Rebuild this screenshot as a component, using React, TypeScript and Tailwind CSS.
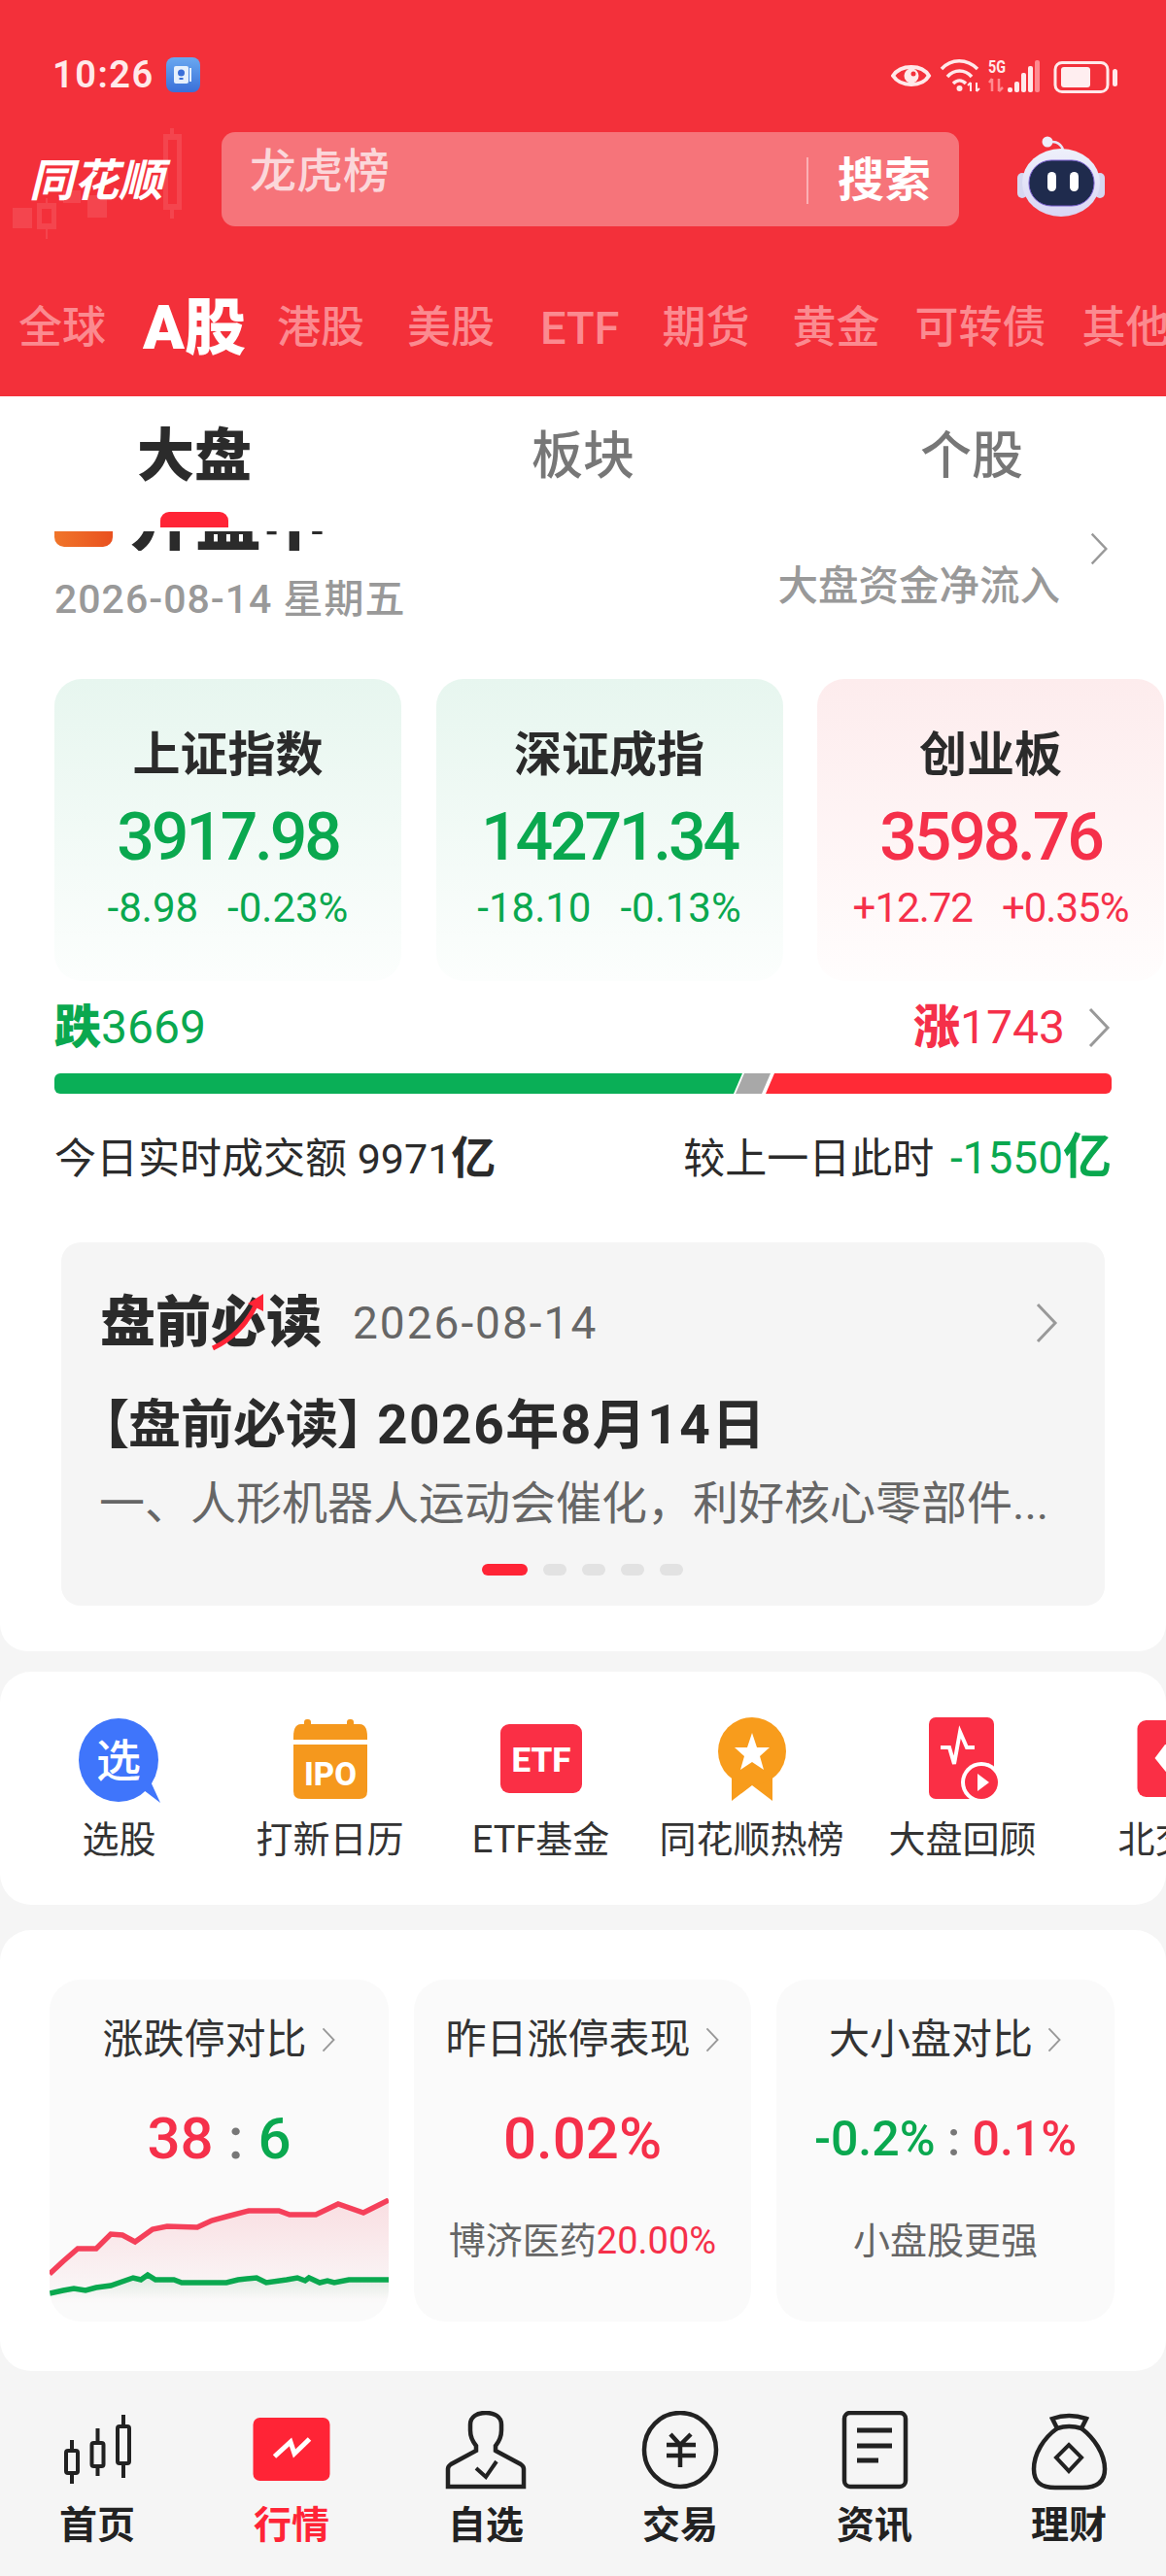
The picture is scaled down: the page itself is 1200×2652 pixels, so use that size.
const Chevron = ({ className = "w-[26px] h-[42px]" }: { className?: string }) => (
  <svg viewBox="0 0 26 42" className={className} fill="none" stroke="#999999" strokeWidth="3">
    <path d="M4 2 L22 21 L4 40" />
  </svg>
);

const marketTabs = [
  { label: "全球", cls: "text-[45px] font-medium text-[#fb8a90]" },
  { label: "A股", cls: "ml-[-6px] mr-[-12px] text-[63px] font-black text-white" },
  { label: "港股", cls: "text-[45px] font-medium text-[#fb8a90]" },
  { label: "美股", cls: "mr-[3px] text-[45px] font-medium text-[#fb8a90]" },
  { label: "ETF", cls: "text-[47px] font-medium text-[#fb8a90]" },
  { label: "期货", cls: "text-[45px] font-medium text-[#fb8a90]" },
  { label: "黄金", cls: "mr-[-8px] text-[45px] font-medium text-[#fb8a90]" },
  { label: "可转债", cls: "mr-[-7px] text-[45px] font-medium text-[#fb8a90]" },
  { label: "其他", cls: "text-[45px] font-medium text-[#fb8a90]" },
];
const RED = "text-[#f5304a]";
const GREEN = "text-[#0aa84f]";

function StatusIcons() {
  return (
    <svg viewBox="0 0 233 40" className="w-[233px] h-[40px]" fill="none">
      {/* eye */}
      <path d="M2 21 C10 9 32 9 39 21 C32 33 10 33 2 21 Z" stroke="#ffe9ea" strokeWidth="4" />
      <circle cx="21" cy="21" r="7.5" fill="#ffe9ea" />
      <circle cx="23" cy="19" r="2.5" fill="#f3303a" />
      {/* wifi */}
      <path d="M52 14 C62 3 78 3 89 14" stroke="#ffe9ea" strokeWidth="3.5" />
      <path d="M58 22 C65 14 76 14 83 22" stroke="#ffe9ea" strokeWidth="3.5" />
      <path d="M64 29 C68 25 73 25 77 29" stroke="#ffe9ea" strokeWidth="3.5" />
      <circle cx="70.5" cy="34" r="3" fill="#ffe9ea" />
      <path d="M82 28 V37 M88 28 V37 M79 31 L82 28 M88 37 L91 34" stroke="#ffe9ea" strokeWidth="2" />
      {/* signal */}
      <text x="100" y="18" fill="#ffe9ea" fontSize="19" fontWeight="700" fontFamily="Roboto" textLength="18" lengthAdjust="spacingAndGlyphs">5G</text>
      <path d="M104 24 V37 M111 24 V37 M101 28 L104 24 M111 37 L115 33" stroke="#ff8a90" strokeWidth="2.5" />
      <rect x="120" y="33" width="5" height="5" rx="2" fill="#ffe9ea" />
      <rect x="127" y="27" width="5" height="11" rx="2" fill="#ffe9ea" />
      <rect x="134" y="18" width="5" height="20" rx="2" fill="#ffe9ea" />
      <rect x="141" y="11" width="5" height="27" rx="2" fill="#ffe9ea" />
      <rect x="148" y="5" width="5" height="33" rx="2" fill="#ff8a90" />
      {/* battery */}
      <rect x="169" y="7.5" width="54" height="30" rx="7" stroke="#ffe9ea" strokeWidth="3" />
      <rect x="175" y="12" width="30" height="21" rx="3" fill="#ffeef0" />
      <rect x="228" y="14" width="5" height="18" rx="2.5" fill="#ffe9ea" />
    </svg>
  );
}

function Robot() {
  return (
    <svg viewBox="0 0 92 90" className="w-[92px] h-[90px]" fill="none">
      <defs>
        <linearGradient id="robotHead" x1="0" y1="0" x2="0" y2="1">
          <stop offset="0" stopColor="#eef0fb" />
          <stop offset="1" stopColor="#d9d6f4" />
        </linearGradient>
      </defs>
      <path d="M32 10 C37 6 45 8 48 16" stroke="#e8e6f7" strokeWidth="2.5" />
      <circle cx="32" cy="8" r="5.5" fill="#eeeefa" />
      <rect x="1" y="40" width="10" height="26" rx="5" fill="#d6d7f0" />
      <rect x="81" y="40" width="10" height="26" rx="5" fill="#d6d7f0" />
      <ellipse cx="46" cy="50" rx="40" ry="35" fill="url(#robotHead)" />
      <rect x="13" y="27" width="67" height="47" rx="23" fill="#1f2b4d" stroke="#7a5fd0" strokeWidth="1" />
      <rect x="32" y="39" width="9" height="20" rx="4.5" fill="#ffffff" />
      <rect x="55" y="39" width="9" height="20" rx="4.5" fill="#ffffff" />
    </svg>
  );
}

function Header() {
  return (
    <div className="h-[408px] shrink-0 bg-[#f3303a] overflow-hidden">
      <div className="mt-[52px] h-[50px] flex items-center justify-between pl-[54px] pr-[50px]">
        <div className="flex items-center gap-[12px]">
          <span className="text-[38px] leading-[50px] font-semibold tracking-[1.5px] text-[#ffe9ea]">10:26</span>
          <div className="w-[35px] h-[36px] rounded-[8px] bg-gradient-to-b from-[#6aa8f0] to-[#3a6fd8] flex items-center justify-center">
            <svg viewBox="0 0 24 24" className="w-[24px] h-[24px]">
              <rect x="3" y="3" width="15" height="18" rx="2" fill="#e6f0fc" />
              <rect x="19" y="5" width="2" height="14" fill="#e6f0fc" />
              <circle cx="10.5" cy="10" r="3.5" fill="#3a6fd8" />
              <rect x="8.5" y="15" width="4" height="2" fill="#3a6fd8" />
            </svg>
          </div>
        </div>
        <StatusIcons />
      </div>
      <div className="mt-[34px] h-[97px] flex">
        <div className="relative w-[228px] shrink-0 flex items-center pl-[30px]">
          <svg viewBox="0 0 190 130" className="absolute left-0 top-[-4px] w-[190px] h-[130px]" fill="#ffffff" fillOpacity="0.1">
            <rect x="13" y="82" width="20" height="21" />
            <path d="M47 72 H49 V77 H58 V104 H49 V114 H47 V104 H38 V77 H47 Z M43 83 V98 H53 V83 Z" fillRule="evenodd" />
            <rect x="65" y="64" width="18" height="13" />
            <rect x="90" y="69" width="20" height="23" />
            <path d="M175 0 H179 V6 H187 V84 H179 V93 H175 V84 H168 V6 H175 Z M173 12 V78 H182 V12 Z" fillRule="evenodd" />
          </svg>
          <span className="relative text-[46px] leading-[60px] mt-[2px] font-bold italic text-white whitespace-nowrap">同花顺</span>
        </div>
        <div className="w-[759px] h-full rounded-[14px] bg-[#f6747a] flex items-center pl-[29px] pr-[29px]">
          <span className="flex-1 text-[48px] leading-[60px] mb-[16px] font-medium text-[#fbd7da]">龙虎榜</span>
          <div className="w-[2px] h-[48px] bg-[#fbb0b4] mr-[30px] mt-[2px]" />
          <span className="text-[48px] leading-[60px] font-bold text-white mt-[2px]">搜索</span>
        </div>
        <div className="ml-[59px] mt-[2px]">
          <Robot />
        </div>
      </div>
      <div className="mt-[75px] h-[60px] flex items-center gap-[44px] pl-[19px] whitespace-nowrap">
        {marketTabs.map((t) => (
          <span key={t.label} className={`leading-[60px] ${t.cls}`}>
            {t.label}
          </span>
        ))}
      </div>
    </div>
  );
}

const indexCards = [
  { name: "上证指数", value: "3917.98", d1: "-8.98", d2: "-0.23%", up: false },
  { name: "深证成指", value: "14271.34", d1: "-18.10", d2: "-0.13%", up: false },
  { name: "创业板", value: "3598.76", d1: "+12.72", d2: "+0.35%", up: true },
];

function IndexCard({ name, value, d1, d2, up }: (typeof indexCards)[number]) {
  return (
    <div className={`w-[357px] h-[311px] shrink-0 rounded-[28px] pt-[49px] flex flex-col items-center bg-gradient-to-b ${up ? "from-[#fdeced] to-[#fffdfd]" : "from-[#e7f6ef] to-[#fcfefd]"}`}>
      <div className="text-[49px] leading-[60px] font-bold text-[#2b2b2b]">{name}</div>
      <div className={`mt-[19px] text-[68px] leading-[70px] font-medium tracking-[-3.2px] ${up ? RED : GREEN}`}>{value}</div>
      <div className={`mt-[13px] text-[42px] leading-[50px] flex gap-[30px] whitespace-nowrap ${up ? `tracking-[-1px] ${RED}` : GREEN}`}>
        <span>{d1}</span>
        <span>{d2}</span>
      </div>
    </div>
  );
}

function MarketPanel() {
  return (
    <div className="shrink-0 h-[1292px] bg-white rounded-b-[28px] overflow-hidden">
      <div className="h-[135px] flex text-[#777]">
        <div className="relative w-[400px] flex justify-center pt-[32px]">
          <span className="text-[59px] leading-[60px] font-black text-[#2b2b2b]">大盘</span>
          <div className="absolute left-[165px] bottom-0 w-[70px] h-[16px] rounded-t-[9px] bg-[#ff2436]" />
        </div>
        <div className="w-[400px] flex justify-center pt-[32px]">
          <span className="text-[53px] leading-[60px] font-medium">板块</span>
        </div>
        <div className="w-[400px] flex justify-center pt-[32px]">
          <span className="text-[53px] leading-[60px] font-medium">个股</span>
        </div>
      </div>
      <div className="h-[156px] px-[56px] flex justify-between">
        <div className="flex flex-col">
          <div className="mt-[4px] h-[20px] flex items-end overflow-hidden gap-[17px]">
            <div className="w-[60px] h-[60px] mb-[4px] rounded-b-[10px] shrink-0 bg-gradient-to-r from-[#f0752a] to-[#e9501f]" />
            <span className="text-[68px] leading-[68px] font-black text-[#2b2b2b] mb-[-5px] whitespace-nowrap">开盘中</span>
          </div>
          <div className="mt-[28px] text-[41px] leading-[44px] tracking-[1px] font-medium text-[#999] whitespace-nowrap">2026-08-14 星期五</div>
        </div>
        <div className="flex flex-col items-end">
          <Chevron className="w-[26px] h-[34px] mt-[5px]" />
          <div className="mr-[53px] mt-[-3px] text-[41.5px] leading-[50px] font-medium text-[#999] whitespace-nowrap">大盘资金净流入</div>
        </div>
      </div>
      <div className="pl-[56px] flex gap-[35.5px]">
        {indexCards.map((c) => (
          <IndexCard key={c.name} {...c} />
        ))}
      </div>
      <div className="mt-[18px] h-[60px] px-[56px] flex items-center justify-between">
        <span className={`text-[48px] leading-[60px] ${GREEN}`}><b className="font-black">跌</b>3669</span>
        <div className="flex items-center gap-[22px]">
          <span className="text-[48px] leading-[60px] text-[#f5304a]"><b className="font-black">涨</b>1743</span>
          <Chevron />
        </div>
      </div>
      <div className="mt-[17px] mx-[56px] h-[21px] flex rounded-[6px] overflow-hidden">
        <div className="w-[708px] bg-[#0aaf57] [clip-path:polygon(0_0,100%_0,calc(100%-9px)_100%,0_100%)]" />
        <div className="w-[36px] ml-[-7px] bg-[#a8a8a8] [clip-path:polygon(9px_0,100%_0,calc(100%-9px)_100%,0_100%)]" />
        <div className="flex-1 ml-[-5px] bg-[#ff2a36] [clip-path:polygon(9px_0,100%_0,100%_100%,0_100%)]" />
      </div>
      <div className="mt-[36px] h-[60px] px-[56px] flex items-center justify-between text-[#2b2b2b]">
        <span className="text-[43px] leading-[60px]">今日实时成交额 9971<b className="text-[46px] font-bold">亿</b></span>
        <span className="text-[43px] leading-[60px]">较上一日此时 <span className={`ml-[6px] text-[46px] ${GREEN}`}>-1550<b className="text-[50px] font-bold">亿</b></span></span>
      </div>
      <div className="mt-[57px] mx-[63px] h-[374px] rounded-[20px] bg-[#f5f5f5] px-[40px] pt-[53px]">
        <div className="h-[60px] flex items-center">
          <span className="relative text-[57px] leading-[60px] font-black text-[#2b2b2b] whitespace-nowrap">
            盘前必读
            <svg viewBox="0 0 70 60" className="absolute left-[108px] top-0 w-[70px] h-[60px]" fill="none">
              <path d="M8 56 C28 47 44 30 53 10" stroke="#ff2436" strokeWidth="5" />
              <path d="M44 10 L60 0 L60 18 Z" fill="#ff2436" />
            </svg>
          </span>
          <span className="ml-[32px] text-[46px] tracking-[2px] leading-[60px] text-[#666]">2026-08-14</span>
          <Chevron className="w-[26px] h-[44px] ml-auto mr-[7px]" />
        </div>
        <div className="mt-[43px] text-[54px] leading-[64px] font-bold text-[#2b2b2b] whitespace-nowrap ml-[2px]">
          <span className="[font-feature-settings:'palt']">【</span>盘前必读<span className="[font-feature-settings:'palt']">】</span>
          <span className="ml-[13px] text-[55px] tracking-[1.5px]">2026年8月14日</span>
        </div>
        <div className="mt-[18px] ml-[-1px] text-[47px] leading-[60px] text-[#666] whitespace-nowrap">一、人形机器人运动会催化，利好核心零部件...</div>
        <div className="mt-[32px] ml-[393px] h-[12px] flex gap-[16px]">
          <div className="w-[47px] rounded-full bg-[#ff2436]" />
          {[0, 1, 2, 3].map((i) => (
            <div key={i} className="w-[24px] rounded-full bg-[#e2e2e2]" />
          ))}
        </div>
      </div>
    </div>
  );
}

const xuanIcon = (
  <svg viewBox="0 0 90 90" className="w-[90px] h-[90px]">
    <path d="M66 74 L76 66 L87 90 Z" fill="#3f75fb" />
    <ellipse cx="44" cy="46" rx="41" ry="43" fill="#3f75fb" />
    <text x="44" y="63" textAnchor="middle" fill="#fff" fontSize="46" fontWeight="500">选</text>
  </svg>
);
const ipoIcon = (
  <svg viewBox="0 0 90 90" className="w-[90px] h-[90px]">
    <rect x="18" y="4" width="7" height="8" rx="3" fill="#f5981d" />
    <rect x="62" y="4" width="7" height="8" rx="3" fill="#f5981d" />
    <path d="M7 22 Q7 9 15 9 H75 Q83 9 83 22 V25 H7 Z" fill="#f5981d" />
    <path d="M7 30 H83 V78 Q83 86 75 86 H15 Q7 86 7 78 Z" fill="#f5981d" />
    <text x="45" y="72" textAnchor="middle" fill="#fff" fontSize="33" fontWeight="800" fontFamily="Roboto" textLength="54">IPO</text>
  </svg>
);
const etfIcon = (
  <svg viewBox="0 0 90 90" className="w-[90px] h-[90px]">
    <rect x="3" y="9" width="84" height="71" rx="9" fill="#fa2f45" />
    <text x="45" y="58" textAnchor="middle" fill="#fff" fontSize="35" fontWeight="800" fontFamily="Roboto">ETF</text>
  </svg>
);
const medalIcon = (
  <svg viewBox="0 0 90 90" className="w-[90px] h-[90px]">
    <path d="M24 55 V88 L45 72 L66 88 V55 Z" fill="#f89c1c" />
    <circle cx="45" cy="37" r="35" fill="#f89c1c" />
    <path d="M45 18 L50 33 L63 33 L53 42 L57 56 L45 48 L33 56 L37 42 L27 33 L40 33 Z" fill="#fff" />
  </svg>
);
const reviewIcon = (
  <svg viewBox="0 0 90 90" className="w-[90px] h-[90px]">
    <rect x="10" y="2" width="67" height="84" rx="7" fill="#fa2f45" />
    <path d="M22 33 H31 L36 50 L42 17 L49 33 H57" fill="none" stroke="#fff" strokeWidth="4" />
    <circle cx="64" cy="69" r="21" fill="#fff" />
    <circle cx="64" cy="69" r="17" fill="#fa2f45" />
    <path d="M60 60 L72 69 L60 78 Z" fill="#fff" />
  </svg>
);
const northIcon = (
  <svg viewBox="0 0 90 90" className="w-[90px] h-[90px]">
    <rect x="7.5" y="5" width="82" height="79" rx="9" fill="#fa2f45" />
    <path d="M25.5 44 L36 30 H54 L65 44 L45 68 Z" fill="#fff" />
    <path d="M45 30 L39 40 H51 Z" fill="#fa8a96" />
  </svg>
);

const quickLinks = [
  { icon: xuanIcon, label: "选股" },
  { icon: ipoIcon, label: "打新日历" },
  { icon: etfIcon, label: "ETF基金" },
  { icon: medalIcon, label: "同花顺热榜" },
  { icon: reviewIcon, label: "大盘回顾" },
  { icon: northIcon, label: "北交所" },
];

function QuickLinks() {
  return (
    <div className="mt-[21px] shrink-0 h-[240px] bg-white rounded-[32px] overflow-hidden pt-[45px] pl-[14px] flex">
      {quickLinks.map((q) => (
        <div key={q.label} className="w-[217px] shrink-0 flex flex-col items-center">
          {q.icon}
          <div className="mt-[16px] text-[38px] leading-[44px] text-[#333] whitespace-nowrap">{q.label}</div>
        </div>
      ))}
    </div>
  );
}

const redLine = "0,78 14,65 29,52 48,52 63,37 75,38 88,45 106,32 121,29 152,30 167,23 182,19 205,13 236,13 247,17 274,17 297,6 323,15 339,7 349,2";
const greenLine = "0,98 14,95 25,93 37,95 48,92 63,90 86,82 94,84 101,79 109,84 128,84 136,87 182,87 194,84 213,82 223,87 244,84 255,82 263,85 267,82 278,87 286,85 293,87 308,84 349,84";

function StatTitle({ text }: { text: string }) {
  return (
    <div className="h-[50px] flex items-center justify-center gap-[14px] text-[42px] leading-[50px] text-[#333] whitespace-nowrap">
      {text}
      <Chevron className="w-[16px] h-[28px]" />
    </div>
  );
}

function StatsCard() {
  return (
    <div className="mt-[26px] shrink-0 h-[454px] bg-white rounded-[32px] pt-[51px] pl-[51px] flex gap-[26px]">
      <div className="w-[349px] h-[352px] rounded-[32px] bg-[#fafafa] overflow-hidden pt-[37px]">
        <StatTitle text="涨跌停对比" />
        <div className="mt-[42px] h-[70px] text-[60px] leading-[70px] text-center font-medium whitespace-nowrap">
          <span className={RED}>38</span>
          <span className="text-[#777]"> : </span>
          <span className={GREEN}>6</span>
        </div>
        <svg viewBox="0 0 349 127" className="mt-[26px] w-[349px] h-[127px]" fill="none">
          <defs>
            <linearGradient id="redArea" x1="0" y1="0" x2="0" y2="1">
              <stop offset="0" stopColor="#f5304a" stopOpacity="0.14" />
              <stop offset="1" stopColor="#f5304a" stopOpacity="0" />
            </linearGradient>
            <linearGradient id="greenArea" x1="0" y1="0" x2="0" y2="1">
              <stop offset="0" stopColor="#0aa84f" stopOpacity="0.12" />
              <stop offset="1" stopColor="#0aa84f" stopOpacity="0" />
            </linearGradient>
          </defs>
          <polygon points={`${redLine} 349,110 0,110`} fill="url(#redArea)" />
          <polygon points={`${greenLine} 349,104 0,104`} fill="url(#greenArea)" />
          <polyline points={redLine} stroke="#f5405a" strokeWidth="5.5" />
          <polyline points={greenLine} stroke="#0aa84f" strokeWidth="5.5" />
        </svg>
      </div>
      <div className="w-[347px] h-[352px] rounded-[32px] bg-[#fafafa] pt-[37px]">
        <StatTitle text="昨日涨停表现" />
        <div className={`mt-[42px] h-[70px] text-[60px] leading-[70px] text-center font-medium ${RED}`}>0.02%</div>
        <div className="mt-[48px] text-[38px] leading-[44px] text-center text-[#666] whitespace-nowrap">
          博济医药<span className={RED}>20.00%</span>
        </div>
      </div>
      <div className="w-[348px] h-[352px] rounded-[32px] bg-[#fafafa] pt-[37px]">
        <StatTitle text="大小盘对比" />
        <div className="mt-[42px] h-[70px] text-[50px] leading-[70px] text-center font-medium whitespace-nowrap">
          <span className={GREEN}>-0.2%</span>
          <span className="text-[#777]"> : </span>
          <span className={RED}>0.1%</span>
        </div>
        <div className="mt-[48px] text-[38px] leading-[44px] text-center text-[#666]">小盘股更强</div>
      </div>
    </div>
  );
}

const stroke = { fill: "none", stroke: "#222222" };
const navItems = [
  {
    label: "首页",
    icon: (
      <g {...stroke} strokeWidth="4">
        <path d="M24 30 V41 M24 64 V75 M50.5 18 V33 M50.5 57 V67 M77 4 V16 M77 54 V69" />
        <rect x="18" y="41" width="12" height="23" rx="2" />
        <rect x="44.5" y="33" width="12" height="24" rx="2" />
        <rect x="71" y="16" width="12" height="38" rx="2" />
      </g>
    ),
  },
  {
    label: "行情",
    icon: (
      <g>
        <rect x="10.5" y="7" width="79" height="65" rx="7" fill="#ff2436" />
        <path d="M32.5 47 L49 32 L53 44 L68.5 29" fill="none" stroke="#fff" strokeWidth="5" />
      </g>
    ),
  },
  {
    label: "自选",
    icon: (
      <g {...stroke} strokeWidth="4.5">
        <path d="M40 36 C36 31 34 26 34 20 V14 C34 6 41 2 50 2 C59 2 66 6 66 14 V20 C66 26 64 31 60 36 V41 L86 55 Q89 57 89 60 V78 H11 V60 Q11 57 14 55 L40 41 Z" />
        <path d="M40 59 L50 68 L61 52" strokeWidth="4" />
      </g>
    ),
  },
  {
    label: "交易",
    icon: (
      <g {...stroke} strokeWidth="4.5">
        <ellipse cx="50" cy="40" rx="37" ry="38" />
        <path d="M40 24 L50 35 L61 24 M36 35 H66 M36 46 H66 M50 35 V58" />
      </g>
    ),
  },
  {
    label: "资讯",
    icon: (
      <g {...stroke} strokeWidth="4.5">
        <rect x="19" y="2" width="63" height="76" rx="6" />
        <path d="M32 20 H68 M32 36 H68 M32 51 H54" strokeWidth="5" />
      </g>
    ),
  },
  {
    label: "理财",
    icon: (
      <g {...stroke} strokeWidth="4.5">
        <path d="M38 18 C24 28 14 44 14 60 C14 74 22 79 36 79 H64 C78 79 87 74 87 60 C87 44 76 28 63 18" />
        <path d="M38 18 L33 8 Q50 2 68 8 L63 18 Q50 14 38 18 Z" />
        <path d="M50 35 L63 48 L50 62 L37 48 Z" strokeWidth="4" />
      </g>
    ),
  },
];

function BottomNav() {
  return (
    <div className="flex-1 pt-[41px] flex">
      {navItems.map((n) => (
        <div key={n.label} className="w-[200px] flex flex-col items-center">
          <svg viewBox="0 0 100 82" className="w-[100px] h-[82px]">{n.icon}</svg>
          <div className={`mt-[14px] text-[39px] leading-[44px] font-bold ${n.label === "行情" ? "text-[#ff2436]" : "text-[#222]"}`}>{n.label}</div>
        </div>
      ))}
    </div>
  );
}

export default function App() {
  return (
    <div className="w-[1200px] h-[2652px] overflow-hidden flex flex-col bg-[#f5f5f5] font-['Roboto','Noto_Sans_CJK_SC',sans-serif]">
      <Header />
      <MarketPanel />
      <QuickLinks />
      <StatsCard />
      <BottomNav />
    </div>
  );
}
